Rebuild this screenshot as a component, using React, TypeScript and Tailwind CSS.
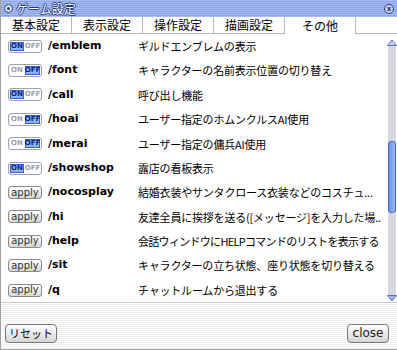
import React from 'react'

type Row = { cmd: string; desc: string; kind: 'on' | 'off' | 'apply'; tight?: boolean }

const rows: Row[] = [
  { cmd: '/emblem', desc: 'ギルドエンブレムの表示', kind: 'on' },
  { cmd: '/font', desc: 'キャラクターの名前表示位置の切り替え', kind: 'off' },
  { cmd: '/call', desc: '呼び出し機能', kind: 'on' },
  { cmd: '/hoai', desc: 'ユーザー指定のホムンクルスAI使用', kind: 'off' },
  { cmd: '/merai', desc: 'ユーザー指定の傭兵AI使用', kind: 'off' },
  { cmd: '/showshop', desc: '露店の看板表示', kind: 'on' },
  { cmd: '/nocosplay', desc: '結婚衣装やサンタクロース衣装などのコスチュ...', kind: 'apply' },
  { cmd: '/hi', desc: '友達全員に挨拶を送る([メッセージ]を入力した場..', kind: 'apply' },
  { cmd: '/help', desc: '会話ウィンドウにHELPコマンドのリストを表示する', kind: 'apply', tight: true },
  { cmd: '/sit', desc: 'キャラクターの立ち状態、座り状態を切り替える', kind: 'apply' },
  { cmd: '/q', desc: 'チャットルームから退出する', kind: 'apply' },
]

const tabs = ['基本設定', '表示設定', '操作設定', '描画設定', 'その他']

const jp = { fontFamily: '"Noto Sans CJK JP", "Noto Sans", sans-serif' }

function Toggle({ on }: { on: boolean }) {
  return (
    <div className="flex h-[13px] w-[34px] items-center gap-[1px] rounded-[3px] border border-[#9aa3b5] bg-white px-[1px] text-[7px] font-bold leading-none" style={{ fontFamily: '"DejaVu Sans", sans-serif' }}>
      <span className={on ? 'flex h-[9px] w-[15px] items-center justify-center border border-[#3b5fc8] bg-[#8fb4f5] text-[#0a1f7a]' : 'flex h-[9px] w-[15px] items-center justify-center text-[#9aa0a8]'}>ON</span>
      <span className={!on ? 'flex h-[9px] w-[15px] items-center justify-center border border-[#3b5fc8] bg-[#8fb4f5] text-[#0a1f7a]' : 'flex h-[9px] w-[15px] items-center justify-center text-[#9aa0a8]'}>OFF</span>
    </div>
  )
}

function Apply() {
  return (
    <div className="flex h-[13px] w-[34px] items-center justify-center rounded-[3px] border border-[#8a8a8a] bg-gradient-to-b from-white to-[#d8d8d8] text-[10px] leading-none text-[#333]" style={{ fontFamily: '"DejaVu Sans", sans-serif' }}>
      apply
    </div>
  )
}

export default function App() {
  return (
    <div className="flex h-[350px] w-[397px] flex-col overflow-hidden border-l border-b border-[#a0a0a0] bg-white">
      {/* Title bar */}
      <div className="flex h-[17px] shrink-0 items-center justify-between bg-[repeating-linear-gradient(180deg,#a9bdf0_0px,#a9bdf0_1px,#8aa4e6_1px,#8aa4e6_2px)] px-[3px]">
        <div className="flex items-center gap-[3px]">
          <div className="flex h-[9px] w-[9px] items-center justify-center rounded-full border border-[#2b3f8a] bg-[#dfe8ff]">
            <div className="h-[3px] w-[3px] rounded-full bg-[#2b3f8a]" />
          </div>
          <span className="text-[12px] leading-none text-white [text-shadow:1px_0_0_#233a80,-1px_0_0_#233a80,0_1px_0_#233a80,0_-1px_0_#233a80]" style={jp}>ゲーム設定</span>
        </div>
        <div className="flex h-[10px] w-[10px] items-center justify-center rounded-full border border-[#2b3f8a] bg-[#c8d4f8] text-[7px] font-bold leading-none text-[#1b2a6a]">x</div>
      </div>

      {/* Tabs */}
      <div className="flex h-[17px] shrink-0">
        {tabs.map((t, i) => (
          <div
            key={t}
            className={
              i === 4
                ? 'flex w-[71px] items-center justify-center border-r border-[#b8b8b8] bg-white text-[12px] leading-none text-black'
                : 'flex w-[71px] items-center justify-center border-r border-b border-[#b8b8b8] bg-white text-[12px] leading-none text-black'
            }
            style={jp}
          >
            {t}
          </div>
        ))}
        <div className="flex-1 border-b border-[#b8b8b8]" />
      </div>

      {/* Body */}
      <div className="flex flex-1 overflow-hidden">
        <div className="flex flex-1 flex-col overflow-hidden">
          {rows.map((r) => (
            <div key={r.cmd} className="flex h-[24.4px] shrink-0 items-center">
              <div className="ml-[7px] w-[34px] shrink-0">
                {r.kind === 'apply' ? <Apply /> : <Toggle on={r.kind === 'on'} />}
              </div>
              <span className="ml-[6px] w-[90px] shrink-0 text-[11px] font-bold text-black" style={{ fontFamily: '"DejaVu Sans", sans-serif' }}>{r.cmd}</span>
              <span className={r.tight ? 'whitespace-nowrap text-[11px] tracking-[-0.7px] text-black' : 'whitespace-nowrap text-[11px] tracking-[-0.2px] text-black'} style={jp}>{r.desc}</span>
            </div>
          ))}
        </div>
        {/* Scrollbar */}
        <div className="flex w-[10px] shrink-0 flex-col items-center pt-[5px]">
          <svg width="10" height="7" viewBox="0 0 10 7"><path d="M0.5 6.5 L5 1 L9.5 6.5 Z" fill="#c3d2f5" stroke="#5a74b8" /></svg>
          <div className="relative w-[8px] flex-1 bg-[#d5d9de]">
            <div className="absolute left-0 top-[95px] h-[72px] w-[8px] rounded-[3px] border border-[#4a6ac0] bg-gradient-to-r from-[#6e92e8] to-[#9cb8f4]" />
          </div>
          <svg width="10" height="7" viewBox="0 0 10 7"><path d="M0.5 0.5 L5 6 L9.5 0.5 Z" fill="#9fb6f0" stroke="#5a74b8" /></svg>
        </div>
      </div>

      {/* Footer */}
      <div className="flex h-[47px] shrink-0 items-center justify-between border-t border-[#c8c8c8] bg-[repeating-linear-gradient(180deg,#ffffff_0px,#ffffff_1px,#f0f0f0_1px,#f0f0f0_2px)] px-[4px] pt-[14px]">
        <div className="flex h-[19px] items-center rounded-[4px] border border-[#777] bg-gradient-to-b from-white to-[#d5d5d5] px-[3px] text-[11px] text-black" style={jp}>リセット</div>
        <div className="mr-[4px] flex h-[19px] w-[42px] items-center justify-center rounded-[4px] border border-[#777] bg-gradient-to-b from-white to-[#d5d5d5] text-[12px] text-[#222]" style={{ fontFamily: '"DejaVu Sans", sans-serif' }}>close</div>
      </div>
    </div>
  )
}
